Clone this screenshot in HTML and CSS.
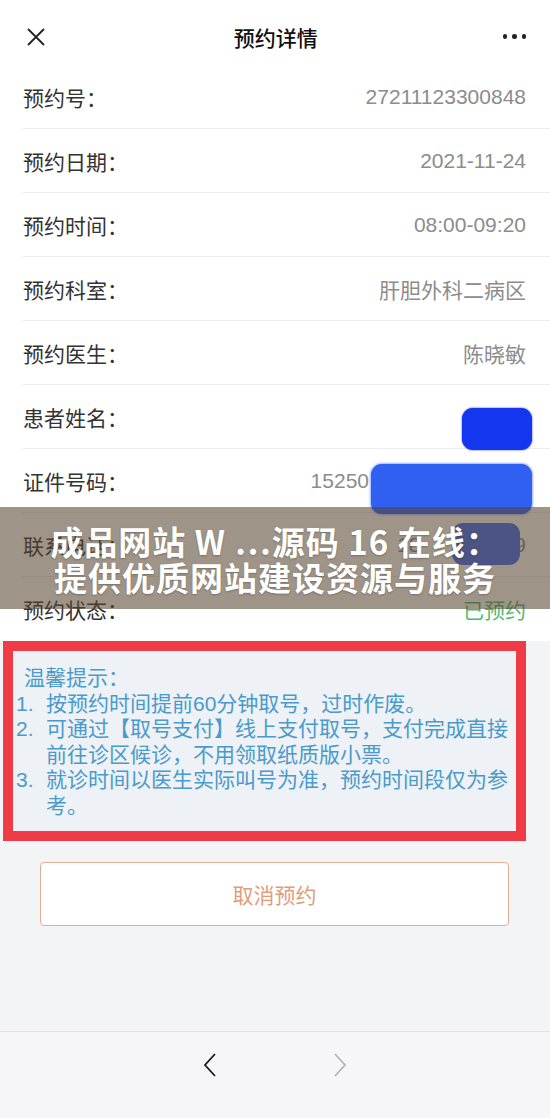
FILE: index.html
```html
<!DOCTYPE html>
<html>
<head>
  <meta charset="utf-8">
  <title>预约详情</title>
  <link rel="stylesheet" href="styles.css">
</head>
<body>
  <div class="screen">
    <div class="nav">
      <svg class="nav-close" width="18" height="18" viewBox="0 0 18 18">
        <path d="M1 1L17 17M17 1L1 17" stroke="#222" stroke-width="1.8" fill="none"/>
      </svg>
      <div class="nav-title">预约详情</div>
      <div class="nav-more"><i></i><i></i><i></i></div>
    </div>

    <ul class="info">
      <li class="info-row"><span class="info-label">预约号：</span><span class="info-value">27211123300848</span></li>
      <li class="info-row"><span class="info-label">预约日期：</span><span class="info-value">2021-11-24</span></li>
      <li class="info-row"><span class="info-label">预约时间：</span><span class="info-value">08:00-09:20</span></li>
      <li class="info-row"><span class="info-label">预约科室：</span><span class="info-value">肝胆外科二病区</span></li>
      <li class="info-row"><span class="info-label">预约医生：</span><span class="info-value">陈晓敏</span></li>
      <li class="info-row">
        <span class="info-label">患者姓名：</span>
        <span class="smear smear-name"></span>
      </li>
      <li class="info-row">
        <span class="info-label">证件号码：</span>
        <span class="info-value value-id">15250</span>
        <span class="smear smear-id"></span>
      </li>
      <li class="info-row">
        <span class="info-label">联系电话：</span>
        <span class="info-value">18<span class="value-gap"></span>9</span>
        <span class="smear smear-phone"></span>
      </li>
      <li class="info-row"><span class="info-label">预约状态：</span><span class="info-value status-ok">已预约</span></li>
    </ul>

    <div class="tips-area">
      <div class="tips">
        <div class="tips-title">温馨提示：</div>
        <ol class="tips-list">
          <li><span class="tips-num">1.</span><span>按预约时间提前60分钟取号，过时作废。</span></li>
          <li><span class="tips-num">2.</span><span>可通过【取号支付】线上支付取号，支付完成直接前往诊区候诊，不用领取纸质版小票。</span></li>
          <li><span class="tips-num">3.</span><span>就诊时间以医生实际叫号为准，预约时间段仅为参考。</span></li>
        </ol>
      </div>
      <button class="cancel-btn">取消预约</button>
    </div>

    <div class="toolbar">
      <svg width="14" height="24" viewBox="0 0 14 24">
        <path d="M12 1L2 12L12 23" stroke="#1a1a1a" stroke-width="1.8" fill="none"/>
      </svg>
      <svg width="14" height="24" viewBox="0 0 14 24">
        <path d="M2 1L12 12L2 23" stroke="#b5b5b5" stroke-width="1.8" fill="none"/>
      </svg>
    </div>

    <!-- watermark band laid over the page -->
    <div class="watermark">成品网站 W …源码 16 在线：<br>提供优质网站建设资源与服务</div>
  </div>
</body>
</html>
```

FILE: styles.css
```css
body {
  margin: 0;
  font-family: "Liberation Sans", "Noto Sans CJK SC", sans-serif;
  background-color: #f3f4f6;
}

.screen {
  position: relative;
  width: 550px;
  height: 1118px;
  display: flex;
  flex-direction: column;
  overflow: hidden;
}

/* top navigation */
.nav {
  height: 65px;
  box-sizing: border-box;
  padding: 8px 24px 0 27px;
  display: flex;
  align-items: center;
  justify-content: space-between;
  background-color: #fff;
}

.nav-title {
  font-size: 21px;
  font-weight: 500;
  color: #111;
  margin-left: 4px;
}

.nav-more {
  display: flex;
  gap: 5px;
}

.nav-more i {
  width: 4.5px;
  height: 4.5px;
  border-radius: 50%;
  background-color: #222;
}

/* detail rows */
.info {
  list-style-type: none;
  margin: 0;
  padding: 0;
  background-color: #fff;
}

.info-row {
  position: relative;
  height: 64px;
  margin-left: 22px;
  padding: 0 24px 0 1px;
  display: flex;
  align-items: center;
  justify-content: space-between;
  border-bottom: 1px solid #ededed;
  box-sizing: border-box;
  font-size: 21px;
}

.info-row:last-child {
  border-bottom: none;
}

.info-label {
  color: #333;
}

.info-value {
  color: #8c8c8c;
}

.value-id {
  margin-right: 157px;
}

.value-gap {
  display: inline-block;
  width: 94px;
}

.status-ok {
  color: #4dba6d;
}

/* blue scribbles hiding personal data */
.smear {
  position: absolute;
  border-radius: 11px;
}

.smear-name {
  left: 440px;
  top: 23px;
  width: 70px;
  height: 42px;
  background-color: #1436ee;
  box-shadow: 0 0 2px #1436ee;
}

.smear-id {
  left: 349px;
  top: 15px;
  width: 161px;
  height: 50px;
  background-color: #2f60f2;
  box-shadow: 0 0 3px #2f60f2;
}

.smear-phone {
  left: 430px;
  top: 10px;
  width: 68px;
  height: 42px;
  background-color: #3f6cf8;
}

/* tips and cancel */
.tips-area {
  flex-grow: 1;
}

.tips {
  margin-left: 3px;
  width: 523px;
  box-sizing: border-box;
  border: 10px solid #ee3b45;
  background-color: #eef1f5;
  padding: 14px 0 13px 3px;
  color: #4a9bcb;
  font-size: 21px;
  line-height: 25.5px;
}

.tips-title {
  padding-left: 8px;
}

.tips-list {
  list-style-type: none;
  margin: 0;
  padding: 0;
}

.tips-list li {
  display: flex;
}

.tips-num {
  flex-shrink: 0;
  width: 30px;
}

.cancel-btn {
  display: block;
  margin: 21px 0 0 40px;
  width: 469px;
  height: 64px;
  background-color: #fff;
  border: 1.5px solid #e3ae94;
  border-radius: 4px;
  color: #e09d7e;
  font-family: "Liberation Sans", "Noto Sans CJK SC", sans-serif;
  font-size: 21px;
}

/* bottom toolbar */
.toolbar {
  height: 87px;
  box-sizing: border-box;
  border-top: 1px solid #e2e2e4;
  background-color: #f6f6f8;
  display: flex;
  justify-content: center;
  gap: 116px;
  padding-top: 21px;
}

/* watermark */
.watermark {
  position: absolute;
  left: 0;
  top: 507px;
  width: 550px;
  height: 102px;
  box-sizing: border-box;
  padding-top: 16px;
  background-color: rgba(86, 66, 46, 0.57);
  color: #fff;
  font-family: "Noto Sans CJK SC", sans-serif;
  font-weight: 700;
  font-size: 33px;
  line-height: 36px;
  letter-spacing: 1px;
  text-align: center;
  text-shadow: 0 1px 2px rgba(0, 0, 0, 0.25);
}
```
